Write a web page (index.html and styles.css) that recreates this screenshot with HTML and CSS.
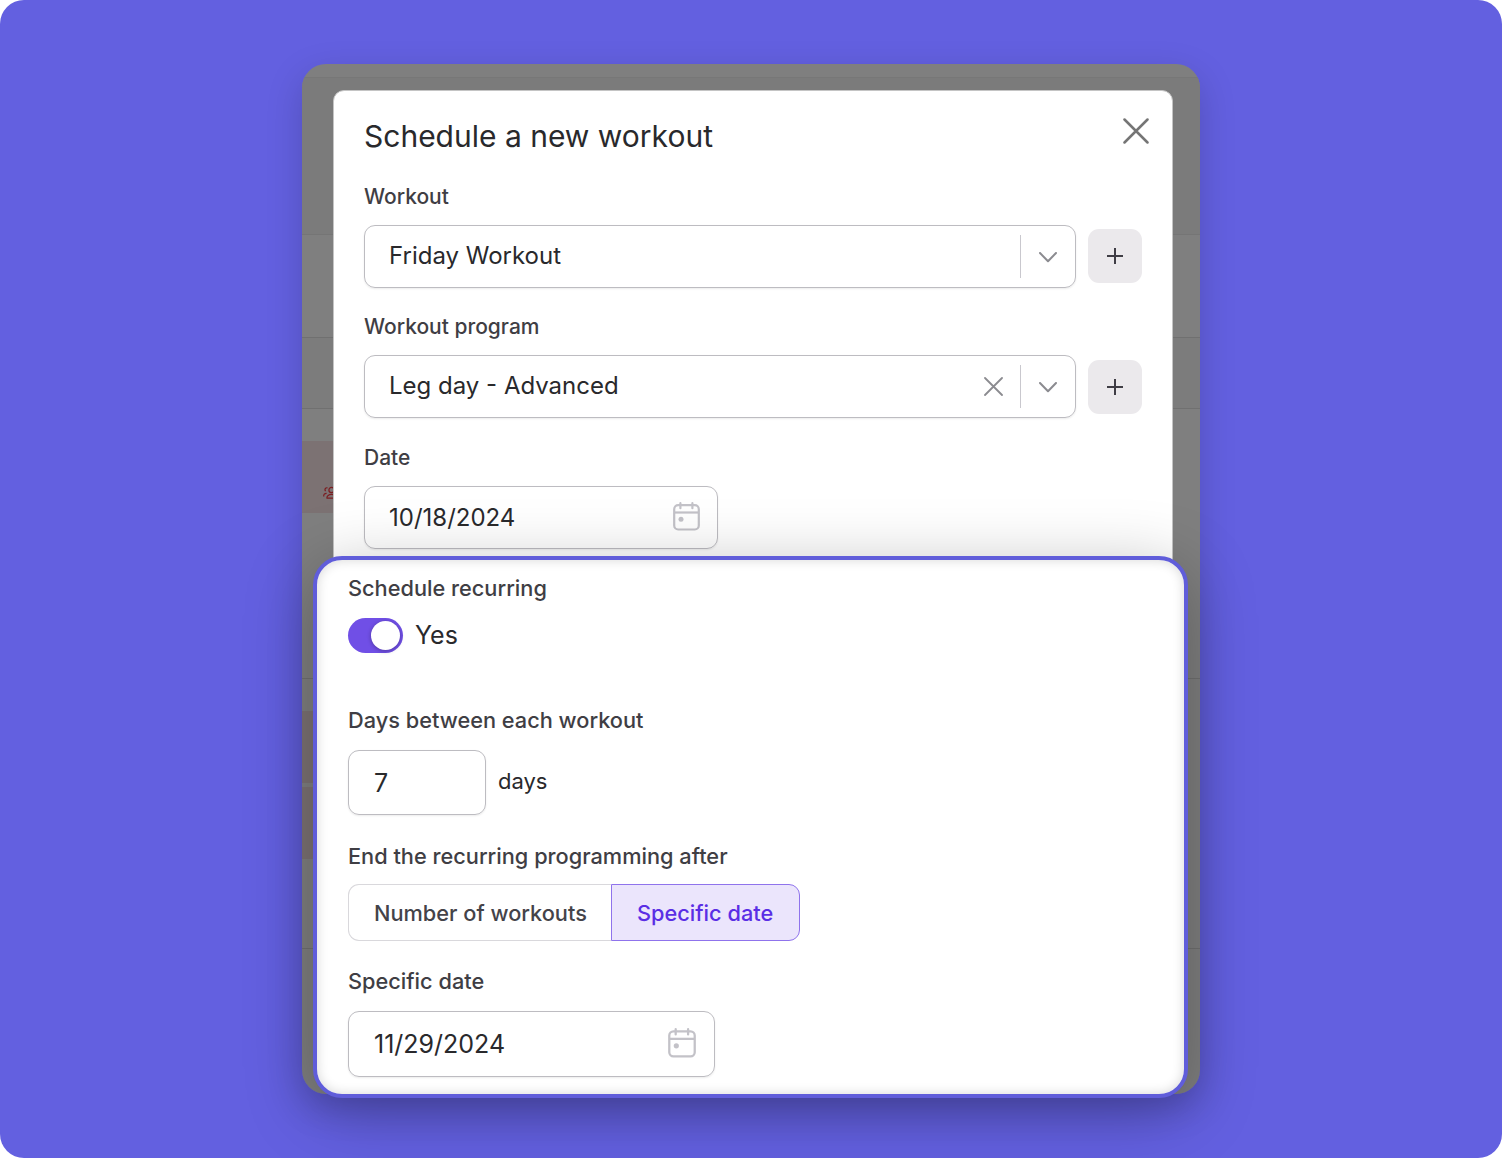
FILE: index.html
```html
<!DOCTYPE html>
<html lang="en">
<head>
    <meta charset="UTF-8">
    <meta name="viewport" content="width=device-width, initial-scale=1.0">
    <title>Schedule a new workout</title>
    <link rel="stylesheet" href="styles.css">
</head>
<body>
    <main class="stage">
        <div class="window">
            <!-- dimmed calendar behind the dialog -->
            <div class="calendar">
                <div class="cal-row cal-top"></div>
                <div class="cal-row cal-toolbar"></div>
                <div class="cal-row cal-filters"></div>
                <div class="cal-row cal-days"></div>
                <div class="cal-row cal-week">
                    <div class="event">
                        <svg class="event-icon" width="20" height="14" viewBox="0 0 20 14" fill="none" stroke="#7b1c20" stroke-width="1.2">
                            <circle cx="8.5" cy="4" r="2.6"/>
                            <path d="M4.5 1.8C2.5 1.4 1.2 3.4 2.6 5.2M.8 10.5C.4 8.5 1.6 7.4 3.6 7.4M4 12.2c-1-5 10-5 9 0z"/>
                        </svg>
                    </div>
                </div>
                <div class="cal-row cal-week">
                    <div class="event"></div>
                    <div class="event"></div>
                </div>
                <div class="cal-row cal-last"></div>
            </div>

            <form class="modal">
                <div class="modal-header">
                    <h1>Schedule a new workout</h1>
                    <svg class="close" width="26" height="26" viewBox="0 0 26 26" fill="none" stroke="#757575" stroke-width="2.5" stroke-linecap="round">
                        <path d="M1.5 1.5l23 23M24.5 1.5l-23 23"/>
                    </svg>
                </div>

                <div class="label">Workout</div>
                <div class="field-row">
                    <div class="select">
                        <span class="value">Friday Workout</span>
                        <span class="divider"></span>
                        <svg class="chevron" width="18" height="11" viewBox="0 0 18 11" fill="none" stroke="#8b8b90" stroke-width="2" stroke-linecap="round" stroke-linejoin="round">
                            <path d="M1 1l8 8.3L17 1"/>
                        </svg>
                    </div>
                    <div class="add">
                        <svg width="16" height="16" viewBox="0 0 16 16" stroke="#3f3d45" stroke-width="2"><path d="M8 0v16M0 8h16"/></svg>
                    </div>
                </div>

                <div class="label">Workout program</div>
                <div class="field-row">
                    <div class="select">
                        <span class="value">Leg day - Advanced</span>
                        <svg class="clear" width="19" height="19" viewBox="0 0 19 19" fill="none" stroke="#8b8b90" stroke-width="1.8" stroke-linecap="round">
                            <path d="M1 1l17 17M18 1L1 18"/>
                        </svg>
                        <span class="divider"></span>
                        <svg class="chevron" width="18" height="11" viewBox="0 0 18 11" fill="none" stroke="#8b8b90" stroke-width="2" stroke-linecap="round" stroke-linejoin="round">
                            <path d="M1 1l8 8.3L17 1"/>
                        </svg>
                    </div>
                    <div class="add">
                        <svg width="16" height="16" viewBox="0 0 16 16" stroke="#3f3d45" stroke-width="2"><path d="M8 0v16M0 8h16"/></svg>
                    </div>
                </div>

                <div class="label">Date</div>
                <div class="select date">
                    <span class="value">10/18/2024</span>
                    <svg class="cal-icon" width="27" height="29" viewBox="0 0 27 29" fill="none" stroke="#c3c2c8" stroke-width="2.2">
                        <rect x="1.2" y="3.2" width="24.6" height="24.3" rx="4"/>
                        <path d="M1 10.5h25"/>
                        <path d="M7.4 1.2v5M19.4 1.2v5" stroke-linecap="round"/>
                        <circle cx="8" cy="17.2" r="2.5" fill="#c3c2c8" stroke="none"/>
                    </svg>
                </div>
            </form>

            <section class="panel">
                <div class="label">Schedule recurring</div>
                <div class="toggle-row">
                    <span class="toggle"><span class="knob"></span></span>
                    <span class="toggle-text">Yes</span>
                </div>

                <div class="label">Days between each workout</div>
                <div class="days-row">
                    <div class="number">7</div>
                    <span class="unit">days</span>
                </div>

                <div class="label">End the recurring programming after</div>
                <div class="segmented">
                    <div class="segment">Number of workouts</div>
                    <div class="segment active">Specific date</div>
                </div>

                <div class="label">Specific date</div>
                <div class="select date date-end">
                    <span class="value">11/29/2024</span>
                    <svg class="cal-icon" width="28" height="30" viewBox="0 0 27 29" fill="none" stroke="#c3c2c8" stroke-width="2.2">
                        <rect x="1.2" y="3.2" width="24.6" height="24.3" rx="4"/>
                        <path d="M1 10.5h25"/>
                        <path d="M7.4 1.2v5M19.4 1.2v5" stroke-linecap="round"/>
                        <circle cx="8" cy="17.2" r="2.5" fill="#c3c2c8" stroke="none"/>
                    </svg>
                </div>
            </section>
        </div>
    </main>
</body>
</html>
```

FILE: styles.css
```css
* {
    box-sizing: border-box;
}

body {
    margin: 0;
    background: #fff;
    font-family: 'Inter', sans-serif;
    color: #29292c;
}

svg {
    display: block;
    flex: none;
}

.stage {
    height: 1158px;
    padding: 64px 302px;
    background: #6360e0;
    border-radius: 24px;
    overflow: hidden;
}

.window {
    position: relative;
    width: 898px;
    height: 1030px;
    border-radius: 24px;
    box-shadow: 0 12px 36px rgba(0, 0, 0, 0.18);
}

/* Calendar */
.calendar {
    height: 100%;
    border-radius: 24px;
    overflow: hidden;
    background: #7f7f7f;
}

.cal-row {
    border-bottom: 1px solid #707070;
}

.cal-top {
    height: 14px;
    border-color: #777;
}

.cal-toolbar {
    height: 157px;
    background: #7b7b7b;
    border-color: #757575;
}

.cal-filters {
    height: 103px;
}

.cal-days {
    height: 71px;
    background: #7c7c7c;
}

.cal-week {
    height: 270px;
    padding-top: 32px;
}

.cal-last {
    border: 0;
}

.event {
    width: 120px;
    height: 72px;
    margin-bottom: 4px;
    padding: 45px 0 0 21px;
    background: #7c7273;
}

/* Dialog */
.modal {
    position: absolute;
    top: 26px;
    left: 31px;
    width: 840px;
    height: 480px;
    padding: 26px 30px 0;
    background: #fff;
    border: 1px solid #c4c4c4;
    border-radius: 11px 11px 0 0;
}

.modal-header {
    display: flex;
    justify-content: space-between;
    height: 65px;
    margin-right: -7px;
}

h1 {
    margin: 0;
    font-size: 30px;
    font-weight: 400;
    line-height: 38px;
}

.close {
    margin-top: 1px;
}

.label {
    font-size: 21px;
    font-weight: 500;
    line-height: 30px;
    color: #3f3e44;
}

.modal .label {
    margin-bottom: 13px;
}

.field-row {
    display: flex;
    align-items: center;
    gap: 12px;
    margin-bottom: 24.4px;
}

.select {
    display: flex;
    align-items: center;
    width: 712px;
    height: 63px;
    padding: 0 18px 0 24px;
    border: 1px solid #bdbcc1;
    border-radius: 11px;
    box-shadow: 0 1px 2px rgba(0, 0, 0, 0.08);
}

.value {
    flex: 1;
    font-size: 24px;
}

.field-row .value {
    padding-bottom: 2px;
}

.chevron {
    margin-top: 1px;
}

.clear {
    margin-right: 17px;
}

.divider {
    width: 1px;
    height: 43px;
    margin-right: 18px;
    background: #c9c8ce;
}

.add {
    display: flex;
    align-items: center;
    justify-content: center;
    width: 54px;
    height: 54px;
    margin-bottom: 0.4px;
    background: #ebe9ec;
    border-radius: 11px;
}

.date {
    width: 354px;
    padding-right: 17px;
}

.cal-icon {
    margin-bottom: 2px;
}

/* Recurring panel */
.panel {
    position: absolute;
    top: 492px;
    left: 11px;
    width: 875px;
    height: 542px;
    padding: 13px 31px 0;
    background: #fff;
    border: 4px solid #605dda;
    border-radius: 29px;
    box-shadow: 0 14px 68px rgba(0, 0, 0, 0.28), inset 0 0 12px rgba(0, 0, 0, 0.16);
}

.panel .label {
    font-size: 21.75px;
}

.toggle-row {
    display: flex;
    align-items: center;
    gap: 12px;
    height: 35px;
    margin: 15px 0 52px;
}

.toggle {
    display: flex;
    justify-content: flex-end;
    width: 55px;
    height: 35px;
    padding: 3px;
    background: #704fe6;
    border-radius: 18px;
}

.knob {
    width: 29px;
    height: 29px;
    background: #fff;
    border-radius: 50%;
    box-shadow: 0 1px 4px rgba(0, 0, 0, 0.3);
}

.toggle-text {
    padding-bottom: 2px;
    font-size: 25px;
    line-height: 34px;
}

.days-row {
    display: flex;
    align-items: center;
    gap: 12px;
    margin: 15px 0 26px;
}

.number {
    width: 138px;
    height: 65px;
    padding-left: 25px;
    font-size: 25px;
    line-height: 64px;
    border: 1px solid #bdbcc1;
    border-radius: 11px;
    box-shadow: 0 1px 2px rgba(0, 0, 0, 0.08);
}

.unit {
    padding-bottom: 4px;
    font-size: 22px;
}

.segmented {
    display: flex;
    width: 452px;
    height: 57px;
    margin: 13px 0 25px;
}

.segment {
    width: 263px;
    padding-left: 25px;
    font-size: 21.75px;
    font-weight: 500;
    line-height: 56px;
    color: #444349;
    border: 1px solid #d9d8dc;
    border-right: 0;
    border-radius: 11px 0 0 11px;
}

.segment.active {
    width: 189px;
    color: #5a2ee5;
    background: #ebe5fc;
    border: 1px solid #8f73ec;
    border-radius: 0 11px 11px 0;
}

.date-end {
    width: 367px;
    height: 66px;
    margin-top: 15px;
    padding-right: 18px;
    padding-left: 25px;
}

.date-end .value {
    font-size: 25px;
}

.date-end .cal-icon {
    margin-bottom: 3px;
}
```
